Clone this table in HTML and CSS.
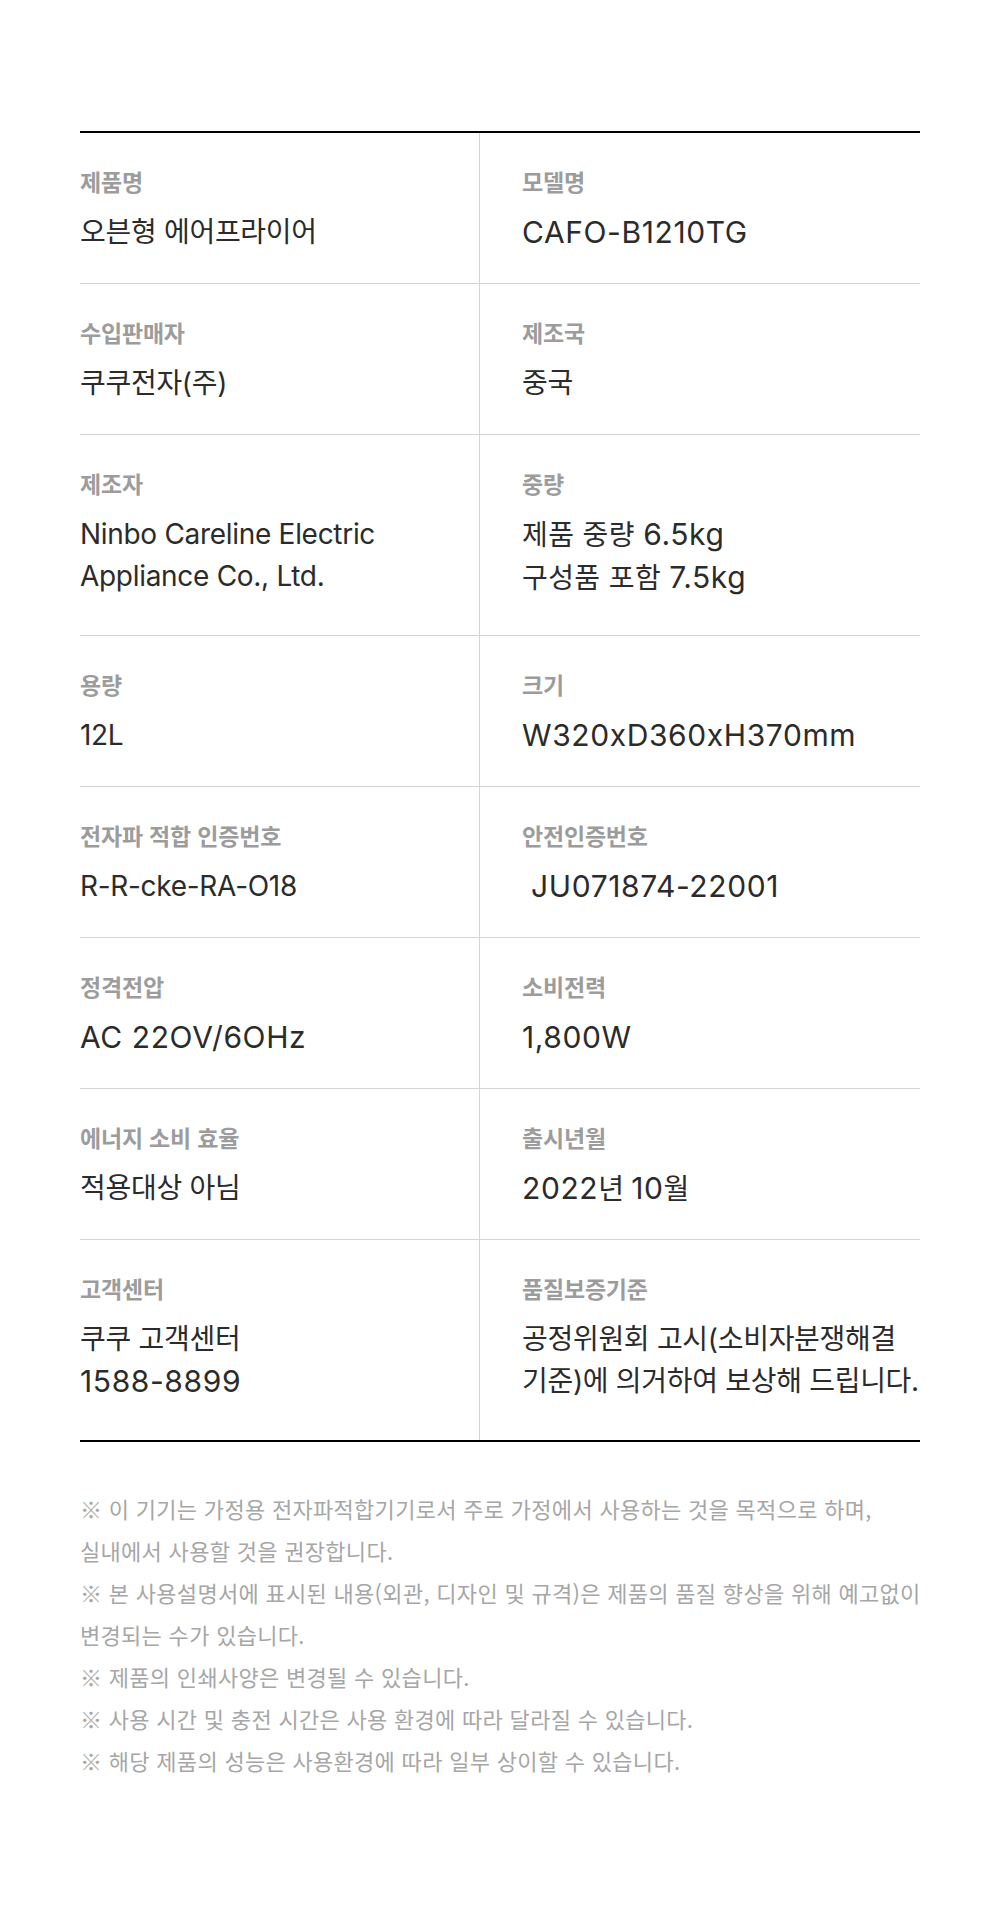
FILE: index.html
```html
<!DOCTYPE html>
<html lang="ko">
<head>
	<meta charset="utf-8">
	<title>제품 정보</title>
	<link rel="stylesheet" href="styles.css">
</head>
<body>
	<div class="spec">
		<div class="spec-row">
			<div class="spec-cell">
				<p class="spec-label">제품명</p>
				<p class="spec-value">오븐형 에어프라이어</p>
			</div>
			<div class="spec-cell">
				<p class="spec-label">모델명</p>
				<p class="spec-value"><span class="num">CAFO-B1210TG</span></p>
			</div>
		</div>
		<div class="spec-row">
			<div class="spec-cell">
				<p class="spec-label">수입판매자</p>
				<p class="spec-value">쿠쿠전자(주)</p>
			</div>
			<div class="spec-cell">
				<p class="spec-label">제조국</p>
				<p class="spec-value">중국</p>
			</div>
		</div>
		<div class="spec-row tall">
			<div class="spec-cell">
				<p class="spec-label">제조자</p>
				<p class="spec-value">Ninbo Careline Electric<br>Appliance Co., Ltd.</p>
			</div>
			<div class="spec-cell">
				<p class="spec-label">중량</p>
				<p class="spec-value wide">제품 중량 <span class="num">6.5kg</span><br>구성품 포함 <span class="num">7.5kg</span></p>
			</div>
		</div>
		<div class="spec-row">
			<div class="spec-cell">
				<p class="spec-label">용량</p>
				<p class="spec-value">12L</p>
			</div>
			<div class="spec-cell">
				<p class="spec-label">크기</p>
				<p class="spec-value"><span class="num">W320xD360xH370mm</span></p>
			</div>
		</div>
		<div class="spec-row">
			<div class="spec-cell">
				<p class="spec-label">전자파 적합 인증번호</p>
				<p class="spec-value">R-R-cke-RA-O18</p>
			</div>
			<div class="spec-cell">
				<p class="spec-label">안전인증번호</p>
				<p class="spec-value"><span class="num">&nbsp;JU071874-22001</span></p>
			</div>
		</div>
		<div class="spec-row">
			<div class="spec-cell">
				<p class="spec-label">정격전압</p>
				<p class="spec-value"><span class="num">AC 22OV/6OHz</span></p>
			</div>
			<div class="spec-cell">
				<p class="spec-label">소비전력</p>
				<p class="spec-value"><span class="num">1,800W</span></p>
			</div>
		</div>
		<div class="spec-row">
			<div class="spec-cell">
				<p class="spec-label">에너지 소비 효율</p>
				<p class="spec-value">적용대상 아님</p>
			</div>
			<div class="spec-cell">
				<p class="spec-label">출시년월</p>
				<p class="spec-value"><span class="num">2022</span>년 <span class="num">10</span>월</p>
			</div>
		</div>
		<div class="spec-row tall">
			<div class="spec-cell">
				<p class="spec-label">고객센터</p>
				<p class="spec-value">쿠쿠 고객센터<br><span class="num">1588-8899</span></p>
			</div>
			<div class="spec-cell">
				<p class="spec-label">품질보증기준</p>
				<p class="spec-value kr">공정위원회 고시(소비자분쟁해결<br>기준)에 의거하여 보상해 드립니다.</p>
			</div>
		</div>
	</div>

	<div class="notice">
		<p>※ 이 기기는 가정용 전자파적합기기로서 주로 가정에서 사용하는 것을 목적으로 하며,<br>실내에서 사용할 것을 권장합니다.</p>
		<p>※ 본 사용설명서에 표시된 내용(외관, 디자인 및 규격)은 제품의 품질 향상을 위해 예고없이<br>변경되는 수가 있습니다.</p>
		<p>※ 제품의 인쇄사양은 변경될 수 있습니다.</p>
		<p>※ 사용 시간 및 충전 시간은 사용 환경에 따라 달라질 수 있습니다.</p>
		<p>※ 해당 제품의 성능은 사용환경에 따라 일부 상이할 수 있습니다.</p>
	</div>
</body>
</html>
```

FILE: styles.css
```css
* {padding: 0; margin: 0;}
body {
	background: #fff;
	font-family: "Inter", "Noto Sans CJK KR", sans-serif;
	color: #2b2b2b;
}

/* 제품 정보 표 */
.spec {
	width: 840px;
	margin: 131px auto 0;
	border-top: 2px solid #000;
	border-bottom: 2px solid #000;
}
.spec-row {
	display: grid;
	grid-template-columns: 399px 1fr;
	min-height: 150px;
	border-top: 1px solid #d4d4d4;
}
.spec-row:first-child {
	border-top: 0;
}
.spec-row.tall {
	min-height: 200px;
}
.spec-cell {
	padding-top: 33px;
}
.spec-cell + .spec-cell {
	border-left: 1px solid #d4d4d4;
	padding-left: 42px;
}
.spec-label {
	font-family: "Noto Sans CJK KR", sans-serif;
	font-size: 23px;
	font-weight: 700;
	line-height: 30px;
	letter-spacing: -0.2px;
	color: #9c9c9c;
}
.spec-value {
	margin-top: 15px;
	font-size: 28px;
	line-height: 42px;
	letter-spacing: -0.3px;
}
.spec-value .num {
	font-size: 30px;
	letter-spacing: 0.6px;
}
.spec-value.wide {
	letter-spacing: 0.4px;
}
.spec-value.kr {
	white-space: nowrap;
}

/* 안내 문구 */
.notice {
	width: 840px;
	margin: 45px auto 0;
	font-family: "Noto Sans CJK KR", sans-serif;
	font-size: 22px;
	line-height: 42px;
	letter-spacing: 0.3px;
	color: #a6a6a6;
	white-space: nowrap;
}
```
